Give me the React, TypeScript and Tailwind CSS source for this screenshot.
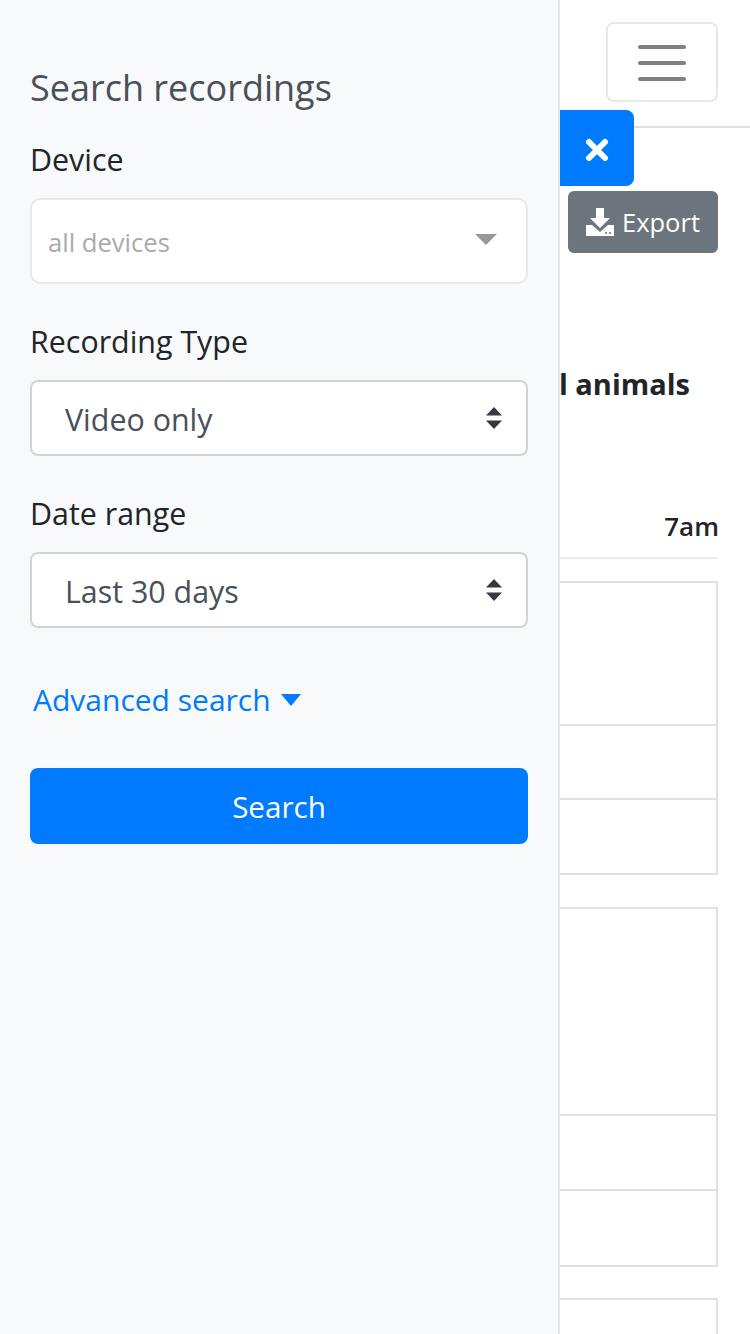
import React from 'react'

const font = { fontFamily: '"Open Sans", sans-serif' }

function Field({ label, value }: { label: string; value: string }) {
    return (
        <div className="mb-[37px]">
            <div className="text-[30.4px] leading-[42px] text-[#212529] mb-[17px]">{label}</div>
            <div className="h-[76px] rounded-lg border-2 border-[#ced4da] bg-white pl-[33px] pr-[24px] flex items-center justify-between">
                <span className="pt-[3px] text-[30.4px] text-[#495057]">{value}</span>
                <svg width="16" height="22" viewBox="0 0 16 22" className="block">
                    <path d="M8 0 L16 8.5 L0 8.5 Z M0 13.5 L16 13.5 L8 22 Z" fill="#343a40" />
                </svg>
            </div>
        </div>
    )
}

export default function App() {
    return (
        <div className="relative flex h-[1334px] w-[750px] overflow-hidden bg-white" style={font}>
            {/* sidebar */}
            <aside className="w-[560px] shrink-0 border-r-2 border-[#e4e7ea] bg-[#f8f9fa] px-[30px] pt-[64px]">
                <h5 className="text-[36px] leading-[48px] text-[#495057] mb-[27px]">Search recordings</h5>
                <div className="text-[30.4px] leading-[42px] text-[#212529] mb-[17px]">Device</div>
                <div className="h-[86px] rounded-[10px] border-2 border-[#e8e8e8] bg-white pl-[16px] pr-[29px] flex items-center justify-between mb-[37px]">
                    <span className="pt-[4px] text-[25.6px] text-[#aaaaaa]">all devices</span>
                    <svg width="22" height="11" viewBox="0 0 22 11" className="block -mt-[4px]">
                        <path d="M0 0 L22 0 L11 11 Z" fill="#999999" />
                    </svg>
                </div>
                <Field label="Recording Type" value="Video only" />
                <Field label="Date range" value="Last 30 days" />
                <div className="flex items-center text-[30px] leading-[42px] text-[#007bff] pl-[3px] mt-[51px]">
                    <span>Advanced search</span>
                    <svg width="20" height="12" viewBox="0 0 20 12" className="ml-[10px]">
                        <path d="M0 0 L20 0 L10 12 Z" fill="#007bff" />
                    </svg>
                </div>
                <button className="mt-[47px] h-[76px] w-full rounded-lg bg-[#007bff] pt-[3px] text-[29.6px] text-white">Search</button>
            </aside>

            {/* page behind the sidebar */}
            <main className="min-w-0 flex-1 overflow-hidden pr-[32px]">
                <div className="-mr-[32px] h-[128px] border-b-2 border-[#dee2e6] pt-[22px] pr-[32px] flex justify-end items-start">
                    <div className="h-[80px] w-[112px] rounded-lg border-2 border-[#e8e8e8] pt-[2px] flex flex-col items-center justify-center gap-[12px]">
                        <span className="h-[4px] w-[48px] rounded-sm bg-[#808080]" />
                        <span className="h-[4px] w-[48px] rounded-sm bg-[#808080]" />
                        <span className="h-[4px] w-[48px] rounded-sm bg-[#808080]" />
                    </div>
                </div>
                <div className="mt-[63px] flex justify-end">
                    <div className="flex h-[62px] w-[150px] items-center justify-center gap-[8px] rounded-md bg-[#6c757d] text-[25.5px] text-white">
                        <svg width="28" height="28" viewBox="0 0 28 28">
                            <path d="M10 0 H18 V10 H24 L14 20 L4 10 H10 Z" fill="#fff" />
                            <path d="M0 17 H6 L14 24 L22 17 H28 V28 H0 Z" fill="#fff" />
                            <circle cx="20" cy="25" r="1" fill="#6c757d" />
                            <circle cx="24" cy="25" r="1" fill="#6c757d" />
                        </svg>
                        <span className="pt-[1px]">Export</span>
                    </div>
                </div>
                <div className="mt-[110px] flex justify-end whitespace-nowrap pr-[28px] text-[29px] font-bold leading-[42px] text-[#212529]">All animals</div>
                <div className="mt-[100px] flex justify-end border-b-2 border-[#e9ecef] pb-[10px] text-[26px] font-semibold leading-[42px] text-[#212529]">
                    <span className="-mr-[1px]">7am</span>
                </div>
                <div className="mt-[22px] border-2 border-l-0 border-[#dee2e6]">
                    <div className="h-[143px] border-b-2 border-[#dee2e6]" />
                    <div className="h-[74px] border-b-2 border-[#dee2e6]" />
                    <div className="h-[73px]" />
                </div>
                <div className="mt-[32px] border-2 border-l-0 border-[#dee2e6]">
                    <div className="h-[207px] border-b-2 border-[#dee2e6]" />
                    <div className="h-[75px] border-b-2 border-[#dee2e6]" />
                    <div className="h-[74px]" />
                </div>
                <div className="mt-[31px] h-[80px] border-2 border-l-0 border-[#dee2e6]" />
            </main>

            {/* close tab sits on top of the navbar line */}
            <div className="absolute left-[560px] top-[110px] flex h-[76px] w-[74px] items-center justify-center rounded-r-lg bg-[#007bff] pt-[3px]">
                <svg width="24" height="24" viewBox="0 0 24 24">
                    <path d="M4 4 L20 20 M20 4 L4 20" stroke="#fff" strokeWidth="6" strokeLinecap="round" />
                </svg>
            </div>
        </div>
    )
}
